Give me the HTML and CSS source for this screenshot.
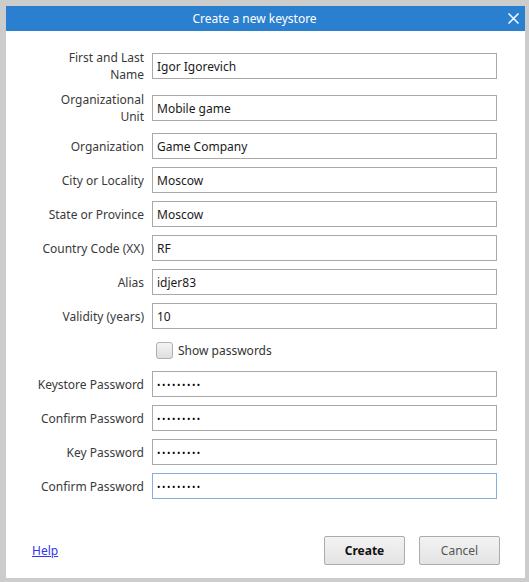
FILE: index.html
```html
<!DOCTYPE html>
<html lang="en">
<head>
<meta charset="utf-8">
<title>Create a new keystore</title>
<link rel="stylesheet" href="styles.css">
</head>
<body>
<div class="dialog">
  <div class="titlebar">
    <span class="title">Create a new keystore</span>
    <svg class="close" width="11" height="11" viewBox="0 0 11 11"><path d="M0.5 0.5 L10.5 10.5 M10.5 0.5 L0.5 10.5" stroke="#fff" stroke-width="1.5" fill="none"/></svg>
  </div>
  <div class="body">
    <form class="form">
      <label class="lbl">First and Last<br>Name</label>
      <div class="field"><input class="inp" type="text" value="Igor Igorevich"></div>

      <label class="lbl">Organizational<br>Unit</label>
      <div class="field"><input class="inp" type="text" value="Mobile game"></div>

      <label class="lbl">Organization</label>
      <div class="field"><input class="inp" type="text" value="Game Company"></div>

      <label class="lbl">City or Locality</label>
      <div class="field"><input class="inp" type="text" value="Moscow"></div>

      <label class="lbl">State or Province</label>
      <div class="field"><input class="inp" type="text" value="Moscow"></div>

      <label class="lbl">Country Code (XX)</label>
      <div class="field"><input class="inp" type="text" value="RF"></div>

      <label class="lbl">Alias</label>
      <div class="field"><input class="inp" type="text" value="idjer83"></div>

      <label class="lbl">Validity (years)</label>
      <div class="field"><input class="inp" type="text" value="10"></div>

      <span></span>
      <div class="field check"><span class="box"></span><span>Show passwords</span></div>

      <label class="lbl">Keystore Password</label>
      <div class="field"><input class="inp pw" type="text" value="•••••••••"></div>

      <label class="lbl">Confirm Password</label>
      <div class="field"><input class="inp pw" type="text" value="•••••••••"></div>

      <label class="lbl">Key Password</label>
      <div class="field"><input class="inp pw" type="text" value="•••••••••"></div>

      <label class="lbl">Confirm Password</label>
      <div class="field"><input class="inp pw focused" type="text" value="•••••••••"></div>
    </form>
    <div class="footer">
      <a class="help" href="#">Help</a>
      <div class="buttons">
        <button class="btn primary" type="button">Create</button>
        <button class="btn" type="button">Cancel</button>
      </div>
    </div>
  </div>
</div>
</body>
</html>
```
FILE: styles.css
```css
html, body {
  margin: 0;
  padding: 0;
}
body {
  width: 529px;
  height: 582px;
  background: #cccccc;
  font-family: "Noto Sans", "Open Sans", "Liberation Sans", sans-serif;
  font-size: 12px;
  color: #333333;
  padding: 6px 4px 4px 6px;
  box-sizing: border-box;
}
.dialog {
  width: 519px;
  height: 572px;
  background: #ffffff;
  display: flex;
  flex-direction: column;
}
.titlebar {
  height: 25px;
  background: #2b7fcf;
  color: #ffffff;
  display: flex;
  align-items: center;
  justify-content: center;
  position: relative;
  font-size: 12px;
  padding-right: 22px;
}
.close {
  position: absolute;
  right: 6px;
  top: 7px;
}
.body {
  flex: 1;
  display: flex;
  flex-direction: column;
  padding: 18px 28px 13px 24px;
}
.form {
  display: grid;
  grid-template-columns: 114px 345px;
  column-gap: 8px;
  row-gap: 8px;
  margin: 0;
}
.lbl {
  text-align: right;
  line-height: 17px;
  align-self: center;
  color: #3a3a3a;
}
.field {
  height: 26px;
  align-self: center;
  display: flex;
  align-items: center;
}
.inp {
  width: 345px;
  height: 26px;
  box-sizing: border-box;
  border: 1px solid #a9a9a9;
  padding: 0 4px;
  font-family: inherit;
  font-size: 12px;
  color: #1a1a1a;
  background: #ffffff;
  outline: none;
  margin: 0;
}
.pw {
  font-size: 9px;
  letter-spacing: 1.6px;
  color: #000000;
}
.focused {
  border-color: #86aee0;
}
.check {
  gap: 5px;
  padding-left: 4px;
}
.box {
  width: 15px;
  height: 15px;
  border: 1px solid #b0b0b0;
  border-radius: 3px;
  background: linear-gradient(#f4f4f4, #dedede);
}
.footer {
  margin-top: auto;
  display: flex;
  align-items: center;
  justify-content: space-between;
  padding-left: 2px;
}
.help {
  color: #3333ee;
  text-decoration: underline;
}
.buttons {
  display: flex;
  gap: 14px;
  margin-right: -3px;
}
.btn {
  width: 81px;
  height: 29px;
  border: 1px solid #acacac;
  border-radius: 2px;
  background: linear-gradient(#f3f3f3, #e3e3e3);
  font-family: inherit;
  font-size: 12px;
  color: #555555;
  padding: 0;
}
.primary {
  font-weight: bold;
  color: #111111;
}
```
